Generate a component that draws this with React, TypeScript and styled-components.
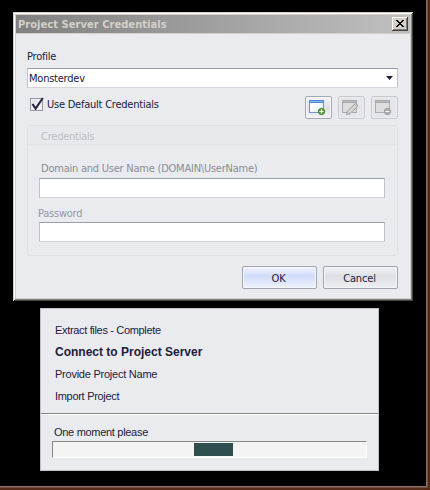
import { useState } from 'react'
import styled, { createGlobalStyle, css } from 'styled-components'

const COLOR = {
  face: '#eaebef',
  text: '#20203c',
  muted: '#8b8b94',
  faint: '#bcbdc5',
}

const STEPS = [
  { name: 'Extract files - Complete', spacing: '-0.33px' },
  { name: 'Connect to Project Server', active: true, spacing: '0px' },
  { name: 'Provide Project Name', spacing: '-0.24px' },
  { name: 'Import Project', spacing: '-0.3px' },
]

export default function App() {
  const [useDefault, setUseDefault] = useState(true)

  return (
    <Desktop>
      <GlobalStyle />
      <Dialog>
        <TitleBar>
          <Title>Project Server Credentials</Title>
          <CloseButton aria-label='Close'>
            <svg width='8' height='7' viewBox='0 0 8 7' shapeRendering='crispEdges'>
              <path
                d='M0 0h2v1h1v1h2v-1h1v-1h2v1h-1v1h-1v1h-1v1h1v1h1v1h1v1h-2v-1h-1v-1h-2v1h-1v1h-2v-1h1v-1h1v-1h1v-1h-1v-1h-1v-1h-1z'
                fill='#000'
              />
            </svg>
          </CloseButton>
        </TitleBar>
        <DialogBody>
          <Label>Profile</Label>
          <Combo>
            <Label>Monsterdev</Label>
            <svg width='7' height='4' viewBox='0 0 7 4'>
              <path d='M0 0h7L3.5 4z' fill='#20203c' />
            </svg>
          </Combo>
          <OptionRow>
            <CheckLabel onClick={() => setUseDefault(!useDefault)}>
              <CheckBox>
                {useDefault && (
                  <svg width='13' height='14' viewBox='0 0 13 14'>
                    <path d='M1.5 7L4.6 11.6L11.8 1' fill='none' stroke='#24243a' strokeWidth='2' />
                  </svg>
                )}
              </CheckBox>
              <Label>Use Default Credentials</Label>
            </CheckLabel>
            <Tools>
              <ToolButton $enabled>
                <WindowIcon kind='add' />
              </ToolButton>
              <ToolButton>
                <WindowIcon kind='edit' />
              </ToolButton>
              <ToolButton>
                <WindowIcon kind='remove' />
              </ToolButton>
            </Tools>
          </OptionRow>
          <Group>
            <GroupHeader>
              <Label $color={COLOR.faint}>Credentials</Label>
            </GroupHeader>
            <GroupBody>
              <FieldLabel $color={COLOR.muted} $indent={2}>
                Domain and User Name (DOMAIN\UserName)
              </FieldLabel>
              <Input />
              <FieldLabel $color='#9697a6' $indent={-1}>
                Password
              </FieldLabel>
              <Input type='password' />
            </GroupBody>
          </Group>
          <Actions>
            <Button $primary>OK</Button>
            <Button>Cancel</Button>
          </Actions>
        </DialogBody>
      </Dialog>
      <Progress>
        <Steps>
          {STEPS.map((step) => (
            <Step key={step.name} $active={step.active} $spacing={step.spacing}>
              {step.name}
            </Step>
          ))}
        </Steps>
        <Status>
          <StatusText>One moment please</StatusText>
          <Track>
            <Marquee />
          </Track>
        </Status>
      </Progress>
    </Desktop>
  )
}

interface WindowIconProps {
  kind: 'add' | 'edit' | 'remove'
}
function WindowIcon({ kind }: WindowIconProps) {
  const isAdd = kind === 'add'
  const line = isAdd ? '#6c93cd' : '#adadad'
  return (
    <svg width='17' height='16' viewBox='0 0 17 16'>
      <linearGradient id='pane' x1='0' y1='0' x2='1' y2='1'>
        <stop offset='0.3' stopColor='#fff' />
        <stop offset='1' stopColor='#d3e5fa' />
      </linearGradient>
      <rect x='0.5' y='1.5' width='14' height='11' fill={isAdd ? 'url(#pane)' : '#dededf'} stroke={line} />
      <rect x='0' y='0' width='15' height='3' rx='0.5' fill={isAdd ? '#4f86d6' : '#a7a7a8'} />
      <rect x='1' y='1' width='13' height='1' fill={isAdd ? '#8ab5ee' : '#bcbcbd'} />
      {kind === 'edit' && (
        <path d='M4.5 14.5l.8-3.4L13 3.7q2.5-.3 2.8 2.5L8 13.7z' fill='#d2d2d3' stroke='#a0a0a1' />
      )}
      {kind !== 'edit' && (
        <>
          <circle cx='12.5' cy='11.5' r='3.1' fill={isAdd ? '#62a537' : '#aaaaab'} stroke={isAdd ? '#397b20' : '#9b9b9c'} />
          <path d={isAdd ? 'M10.5 11.5h4M12.5 9.5v4' : 'M10.5 11.5h4'} stroke='#f4f7ef' strokeWidth='1.2' />
        </>
      )}
    </svg>
  )
}

const GlobalStyle = createGlobalStyle`
  * {
    box-sizing: border-box;
  }
  body {
    margin: 0;
    background: #000;
    font-family: 'DejaVu Sans Condensed', 'DejaVu Sans', sans-serif;
    font-stretch: condensed;
    font-size: 11px;
    color: ${COLOR.text};
  }
  svg {
    display: block;
    flex: none;
  }
`

const Desktop = styled.div`
  width: 430px;
  height: 490px;
  padding: 12px 0 0 13px;
  overflow: hidden;
  background: #000;
  box-shadow: inset -1px -1px #56270f, inset -2px -2px #542c1d, inset -3px -3px #714c40, inset -4px -4px #887066;
`

const Dialog = styled.div`
  width: 400px;
  height: 289px;
  padding: 3px;
  background: ${COLOR.face};
  box-shadow: inset 1px 1px #d4d0c8, inset -1px -1px #404040, inset 2px 2px #fff, inset -2px -2px #808080,
    inset 3px 3px #d4d0c8, inset -3px -3px #d4d0c8;
`

const TitleBar = styled.div`
  display: flex;
  align-items: center;
  justify-content: space-between;
  height: 19px;
  padding: 0 2px;
  border-bottom: 1px solid #d4d0c8;
  background: linear-gradient(90deg, #808080, #c0c0c0);
`

const Title = styled.span`
  padding-top: 2px;
  font-weight: bold;
  line-height: 16px;
  letter-spacing: 0.06px;
  white-space: nowrap;
  color: #d4d0c8;
`

const CloseButton = styled.button`
  display: flex;
  align-items: center;
  justify-content: center;
  width: 16px;
  height: 14px;
  padding: 0 1px 1px 0;
  border: 0;
  background: #d4d0c8;
  box-shadow: inset -1px -1px #404040, inset 1px 1px #fff, inset -2px -2px #808080;
`

const DialogBody = styled.div`
  padding: 15px 12px 0 11px;
`

const Label = styled.div<{ $color?: string }>`
  height: 14px;
  line-height: 16px;
  letter-spacing: -0.23px;
  white-space: nowrap;
  color: ${({ $color }) => $color ?? COLOR.text};
`

const inset = css`
  border: 1px solid;
  border-color: #9b9dab #bfc0ca #d4d5dc #bfc0ca;
  background: #fff;
`

const Combo = styled.div`
  ${inset}
  display: flex;
  align-items: center;
  justify-content: space-between;
  height: 20px;
  margin-top: 5px;
  padding: 0 4px 0 1px;
`

const OptionRow = styled.div`
  display: flex;
  align-items: flex-start;
  justify-content: space-between;
  height: 37px;
  padding: 8px 0 0 3px;
`

const CheckLabel = styled.label`
  display: flex;
  align-items: center;
  gap: 4px;
  margin-top: 1px;
`

const CheckBox = styled.span`
  display: flex;
  width: 13px;
  height: 13px;
  border: 1px solid #9698aa;
  background: linear-gradient(135deg, #dfe0e6, #f8f8fa);
  box-shadow: inset 0 0 0 1px #eeeef2;

  svg {
    margin-top: -2px;
  }
`

const Tools = styled.div`
  display: flex;
  gap: 6px;
`

const ToolButton = styled.button<{ $enabled?: boolean }>`
  display: flex;
  align-items: flex-start;
  justify-content: flex-start;
  width: 27px;
  height: 23px;
  padding: 3px 0 0 3px;
  border: 1px solid ${({ $enabled }) => ($enabled ? '#a5a7b5' : '#c8c9d0')};
  border-radius: 2px;
  background: ${({ $enabled }) => ($enabled ? 'linear-gradient(#f4f5f8, #e0e1e8 50%, #f1f2f5)' : '#e5e6ea')};
  box-shadow: inset 0 0 0 1px ${({ $enabled }) => ($enabled ? '#f7f7fa' : '#ececf0')};
`

const Group = styled.div`
  height: 131px;
  border: 1px solid #e0e1e5;
  border-radius: 3px;
`

const GroupHeader = styled.div`
  height: 19px;
  padding: 3px 0 0 13px;
  border-bottom: 1px solid #e4e5e8;
  background: #e8e9ec;
`

const GroupBody = styled.div`
  padding: 16px 12px 0 11px;
`

const FieldLabel = styled(Label)<{ $indent: number }>`
  margin-left: ${({ $indent }) => $indent}px;
`

const Input = styled.input`
  ${inset}
  display: block;
  width: 100%;
  height: 20px;
  margin: 3px 0 8px;
  padding: 0 3px;
  outline: none;

  & ~ & {
    margin-top: 2px;
  }
`

const Actions = styled.div`
  display: flex;
  justify-content: flex-end;
  gap: 6px;
  margin-top: 10px;
`

const Button = styled.button<{ $primary?: boolean }>`
  width: 75px;
  height: 23px;
  padding: 2px 2px 0 0;
  border: 1px solid #a2a4b1;
  border-radius: 2px;
  font: inherit;
  letter-spacing: -0.15px;
  color: ${COLOR.text};
  background: ${({ $primary }) =>
    $primary
      ? 'linear-gradient(#eef2fd, #dde5fb 30%, #d0dbf9 40%, #eef2fd)'
      : 'linear-gradient(#f0f1f3, #e6e7eb 30%, #dddfe4 40%, #eeeff2)'};
  box-shadow: inset 0 0 0 1px ${({ $primary }) => ($primary ? '#f6f8ff' : '#f5f5f8')};
`

const Progress = styled.div`
  width: 339px;
  height: 163px;
  margin: 7px 0 0 27px;
  border: 1px solid #bfc1c9;
  background: ${COLOR.face};
  font-family: 'Liberation Sans', Arial, sans-serif;
  font-size: 11px;
`

const Steps = styled.div`
  height: 105px;
  padding: 10px 14px 0;
  border-bottom: 1px solid #858983;
`

const Step = styled.div<{ $active?: boolean; $spacing: string }>`
  height: 22px;
  line-height: 22px;
  font-size: ${({ $active }) => ($active ? 12 : 11)}px;
  font-weight: ${({ $active }) => ($active ? 'bold' : 'normal')};
  letter-spacing: ${({ $spacing }) => $spacing};
  white-space: nowrap;
`

const Status = styled.div`
  padding: 10px 11px 0;
  border-top: 1px solid #fff;
`

const StatusText = styled.div`
  height: 16px;
  padding-left: 2px;
  line-height: 15px;
  letter-spacing: -0.3px;
`

const Track = styled.div`
  display: flex;
  height: 17px;
  padding: 1px 0 1px 141px;
  border: 1px solid;
  border-color: #858983 #fff #fff #858983;
  background: #f4f4f4;
`

const Marquee = styled.div`
  width: 39px;
  height: 13px;
  background: #2f4f4f;
`
